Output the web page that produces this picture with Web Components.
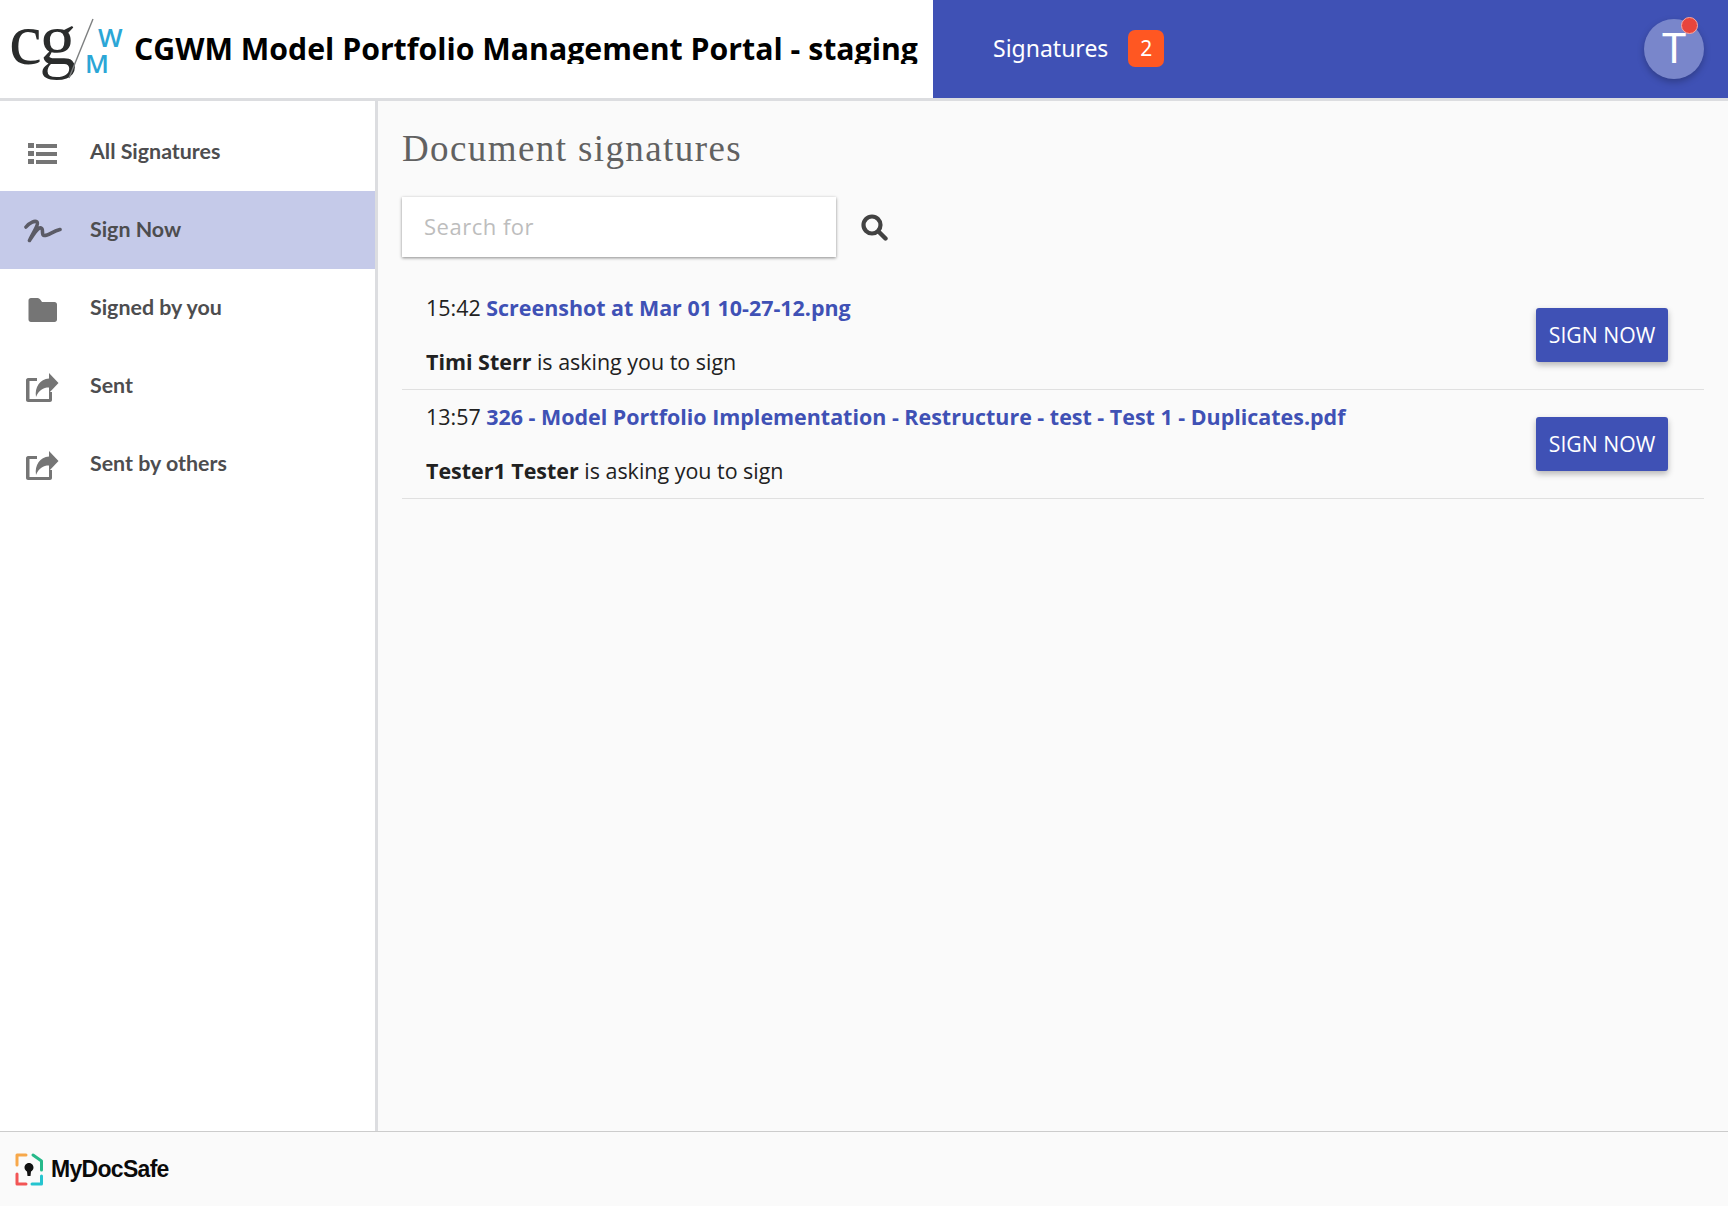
<!DOCTYPE html>
<html><head><meta charset="utf-8"><style>
html,body{margin:0;padding:0;height:100%}
body{width:1728px;height:1206px;overflow:hidden;font-family:"Open Sans",sans-serif;background:#fff}
</style></head><body>
<app-shell>
<top-bar slot="top"></top-bar>
<side-nav slot="side">
 <nav-item label="All Signatures" icon="list"></nav-item>
 <nav-item label="Sign Now" icon="sign" active></nav-item>
 <nav-item label="Signed by you" icon="folder"></nav-item>
 <nav-item label="Sent" icon="share"></nav-item>
 <nav-item label="Sent by others" icon="share"></nav-item>
</side-nav>
<main-panel slot="main">
 <sig-row time="15:42" file="Screenshot at Mar 01 10-27-12.png" who="Timi Sterr"></sig-row>
 <sig-row time="13:57" file="326 - Model Portfolio Implementation - Restructure - test - Test 1 - Duplicates.pdf" who="Tester1 Tester"></sig-row>
</main-panel>
<foot-bar slot="foot"></foot-bar>
</app-shell>
<script>
function def(name,html){customElements.define(name,class extends HTMLElement{constructor(){super();const s=this.attachShadow({mode:'open'});s.innerHTML=typeof html==='function'?html(this):html;}});}
const icons={
list:`<svg style="margin-top:4px" width="32" height="26" viewBox="0 0 32 26" fill="#757575"><rect x="2" y="2" width="6" height="5"/><rect x="10" y="3" width="21" height="4"/><rect x="2" y="10" width="6" height="5"/><rect x="10" y="11" width="21" height="4"/><rect x="2" y="18" width="6" height="5"/><rect x="10" y="19" width="21" height="4"/></svg>`,
sign:`<svg style="margin-top:3px;margin-left:1px" width="38" height="26" viewBox="0 0 38 26" fill="none"><path d="M2 8C6 3 11 1.500 13 3C15 5 9 14 5.500 21.500C9 16 14 8 17 9C20 10 17 16 20 16.500C24 17 29 12 36 10.500" stroke="#5b5b66" stroke-width="3.600" stroke-linecap="round" stroke-linejoin="round"/></svg>`,
folder:`<svg style="margin-top:3px" width="32" height="26" viewBox="0 0 32 26" fill="#757575"><path d="M5 1H11.500C13 1 14 2 15 3.500L16 5H28.500C30 5 31 6 31 7.500V22.500C31 24 30 25 28.500 25H5C3.500 25 2.500 24 2.500 22.500V3.500C2.500 2 3.500 1 5 1Z"/></svg>`,
share:`<svg style="margin-top:3px" width="34" height="31" viewBox="0 0 34 31" fill="#757575"><path d="M1 8C1 7 2 6 3 6H12V9H4.500V27H24V20H27V28C27 29 26 30 25 30H3C2 30 1 29 1 28Z"/><path d="M24 1L33.500 11L24 21V15.500C18 15.500 14 18 11 25C9.500 15 15 7 24 6.500Z"/></svg>`};
def('app-shell',`<style>:host{display:grid;grid-template-columns:378px 1fr;grid-template-rows:101px 1030px 75px;width:1728px;height:1206px}
::slotted([slot=top]),::slotted([slot=foot]){grid-column:1/3}</style>
<slot name="top"></slot><slot name="side"></slot><slot name="main"></slot><slot name="foot"></slot>`);
def('top-bar',`<style>
:host{display:flex;height:101px;box-sizing:border-box;border-bottom:3px solid #dcdde0;background:#fff}
.l{width:933px;display:flex;align-items:flex-start;background:#fff;overflow:hidden}
.logo{position:relative;width:134px;height:98px;flex:none}
.cg{position:absolute;left:9px;top:2px;font:74px/74px "Liberation Serif",serif;color:#2a2c2c;letter-spacing:-2.500px}
.logo svg{position:absolute;left:0;top:0}
.w{position:absolute;left:98px;top:26px;font:600 26px/22px "Open Sans",sans-serif;color:#2ba6d6}
.m{position:absolute;left:85px;top:52px;font:600 26px/22px "Open Sans",sans-serif;color:#2ba6d6}
.t{height:64px;overflow:hidden;font:700 30.25px/98px "Open Sans",sans-serif;color:#000;white-space:nowrap}
.r{flex:1;background:#3f51b5;display:flex;align-items:center;position:relative;padding-left:60px}
.s{font:400 23px/30px "Noto Sans",sans-serif;color:#fff;position:relative;top:-1px}
.b{margin-left:20px;width:36px;height:37px;background:#ff5722;border-radius:7px;color:#fff;font:400 21px/37px "Noto Sans",sans-serif;text-align:center;position:relative;top:-1px}
.a{position:absolute;left:711px;top:19px;width:60px;height:60px;border-radius:50%;background:#7986cb;color:#fff;font:400 42px/60px "Roboto",sans-serif;text-align:center;box-shadow:0 3px 7px rgba(0,0,0,.25)}
.d{position:absolute;left:37px;top:-2px;width:15px;height:15px;border-radius:50%;background:#e8453c;border:1.5px solid #f7a8a0}
</style>
<div class="l"><div class="logo"><span class="cg">cg</span>
<svg width="134" height="98"><line x1="93" y1="19" x2="69" y2="78" stroke="#7d7f80" stroke-width="1.4"/></svg>
<span class="w">W</span><span class="m">M</span></div><div class="t">CGWM Model Portfolio Management Portal - staging</div></div>
<div class="r"><span class="s">Signatures</span><span class="b">2</span><div class="a">T<span class="d"></span></div></div>`);
def('side-nav',`<style>:host{display:flex;flex-direction:column;box-sizing:border-box;width:378px;border-right:3px solid #dcdde0;padding-top:12px;background:#fff}</style><slot></slot>`);
def('nav-item',e=>`<style>
:host{display:flex;align-items:center;height:78px;background:${e.hasAttribute('active')?'#c5cae9':'transparent'}}
.i{width:84px;margin-right:6px;display:flex;justify-content:center;flex:none}
.x{font:700 21.4px/26px "Lato",sans-serif;color:#4d4d4f;position:relative;top:-1px;white-space:nowrap}
</style><div class="i">${icons[e.getAttribute('icon')]}</div><span class="x">${e.getAttribute('label')}</span>`);
def('main-panel',`<style>
:host{display:block;background:#fafafa;box-sizing:border-box;padding:27px 24px 0 24px;height:1030px}
h1{margin:0;font:400 37px/42px "Liberation Serif",serif;color:#616161;letter-spacing:1.400px}
.s{display:flex;align-items:center;margin-top:27px;margin-bottom:24px}
.inp{width:434px;height:60px;background:#fff;box-shadow:0 1px 3px rgba(0,0,0,.45);box-sizing:border-box;padding-left:22px;font:400 22px/58px "Open Sans",sans-serif;color:#bdbdbd;letter-spacing:.5px}
svg{margin-left:25px}
</style><h1>Document signatures</h1>
<div class="s"><div class="inp">Search for</div><svg width="27" height="27" viewBox="0 0 27 27" fill="none" stroke="#424242"><circle cx="11" cy="11" r="8.500" stroke-width="4.200"/><path d="M17.500 17.500L24.500 24.500" stroke-width="4.400" stroke-linecap="round"/></svg></div>
<slot></slot>`);
def('sig-row',e=>`<style>
:host{display:flex;justify-content:space-between;align-items:center;height:109px;box-sizing:border-box;border-bottom:1px solid #e0e0e0;padding:0 36px 0 24px;font:400 21.45px/28px "Open Sans",sans-serif;color:#212121}
.c{display:flex;flex-direction:column;gap:26px}
a{color:#3f51b5;font-weight:700;text-decoration:none}
b{font-weight:700}
button{width:132px;height:54px;border:0;border-radius:3px;background:#3f51b5;color:#fff;font:400 21.2px/54px "Open Sans",sans-serif;padding:0;box-shadow:0 3px 6px rgba(0,0,0,.28)}
</style><div class="c"><div>${e.getAttribute('time')} <a>${e.getAttribute('file')}</a></div><div><b>${e.getAttribute('who')}</b> is asking you to sign</div></div><button>SIGN NOW</button>`);
def('foot-bar',`<style>
:host{display:flex;align-items:center;box-sizing:border-box;height:75px;border-top:1px solid #ccc;background:#fafafa;padding-left:15px;gap:8px}
span{font:700 23px/30px "Liberation Sans",sans-serif;color:#0a0a0a;letter-spacing:-.7px}
</style><svg width="28" height="33" viewBox="0 0 28 33" fill="none" stroke-width="3" stroke-linecap="round" stroke-linejoin="round">
<path d="M11 2H2V12" stroke="#f7a84a"/><path d="M18 2L26.500 8V17" stroke="#26b98a"/><path d="M2 21V31H11" stroke="#f25555"/><path d="M17 31H26.500V23" stroke="#25c4cf"/>
<path d="M14 10C11 10 9.500 12.500 9.500 14.500C9.500 16.500 11 18 12 18.500L12.500 23H15.500L16 18.500C17 18 18.500 16.500 18.500 14.500C18.500 12.500 17 10 14 10Z" fill="#111" stroke="none"/></svg><span>MyDocSafe</span>`);
</script>
</body></html>
